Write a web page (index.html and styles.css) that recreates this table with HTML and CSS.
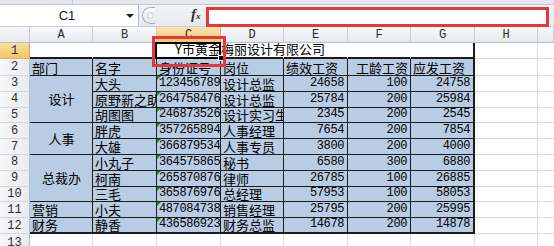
FILE: index.html
```html
<!DOCTYPE html>
<html lang="zh-CN">
<head>
<meta charset="utf-8">
<title>Sheet</title>
<link rel="stylesheet" href="styles.css">
</head>
<body>
<div class="app">
  <div class="top"><span class="sep"></span></div>
  <div class="fbar">
    <div class="namebox"><span class="ref">C1</span><span class="arrow"></span></div>
    <div class="splitter"><span class="dot"></span></div>
    <div class="fx">f<span class="sub">x</span></div>
    <div class="input"></div>
  </div>
  <div class="sheet">
    <div class="corner"></div>
    <div class="ch">A</div><div class="ch">B</div><div class="ch sel">C</div><div class="ch">D</div><div class="ch">E</div><div class="ch">F</div><div class="ch">G</div><div class="ch">H</div><div class="ch last"></div>

    <div class="rh sel">1</div>
    <div class="c r1"></div><div class="c r1"></div>
    <div class="c r1 title"><span class="ttext">Y市黄金梅丽设计有限公司</span><span class="selbox"></span><span class="handle"></span></div>
    <div class="c r1"></div><div class="c r1"></div><div class="c r1"></div><div class="c r1 gend"></div>
    <div class="c"></div><div class="c last"></div>

    <div class="rh h2">2</div>
    <div class="c t">部门</div><div class="c t">名字</div><div class="c t">身份证号</div><div class="c t">岗位</div><div class="c t">绩效工资</div><div class="c t right">工龄工资</div><div class="c t gend">应发工资</div>
    <div class="c"></div><div class="c last"></div>

    <div class="rh">3</div>
    <div class="c t merge m3">设计</div><div class="c t">大头</div><div class="c t id">123456789</div><div class="c t">设计总监</div><div class="c t n">24658</div><div class="c t n">100</div><div class="c t n gend">24758</div>
    <div class="c"></div><div class="c last"></div>

    <div class="rh">4</div>
    <div class="c t">原野新之助</div><div class="c t id">264758476</div><div class="c t">设计总监</div><div class="c t n">25784</div><div class="c t n">200</div><div class="c t n gend">25984</div>
    <div class="c"></div><div class="c last"></div>

    <div class="rh">5</div>
    <div class="c t">胡图图</div><div class="c t id">246873526</div><div class="c t">设计实习生</div><div class="c t n">2345</div><div class="c t n">200</div><div class="c t n gend">2545</div>
    <div class="c"></div><div class="c last"></div>

    <div class="rh">6</div>
    <div class="c t merge m2">人事</div><div class="c t">胖虎</div><div class="c t id">357265894</div><div class="c t">人事经理</div><div class="c t n">7654</div><div class="c t n">200</div><div class="c t n gend">7854</div>
    <div class="c"></div><div class="c last"></div>

    <div class="rh">7</div>
    <div class="c t">大雄</div><div class="c t id">366879534</div><div class="c t">人事专员</div><div class="c t n">3800</div><div class="c t n">200</div><div class="c t n gend">4000</div>
    <div class="c"></div><div class="c last"></div>

    <div class="rh">8</div>
    <div class="c t merge m3">总裁办</div><div class="c t">小丸子</div><div class="c t id">364575865</div><div class="c t">秘书</div><div class="c t n">6580</div><div class="c t n">300</div><div class="c t n gend">6880</div>
    <div class="c"></div><div class="c last"></div>

    <div class="rh">9</div>
    <div class="c t">柯南</div><div class="c t id">265870876</div><div class="c t">律师</div><div class="c t n">26785</div><div class="c t n">100</div><div class="c t n gend">26885</div>
    <div class="c"></div><div class="c last"></div>

    <div class="rh">10</div>
    <div class="c t">三毛</div><div class="c t id">365876976</div><div class="c t">总经理</div><div class="c t n">57953</div><div class="c t n">100</div><div class="c t n gend">58053</div>
    <div class="c"></div><div class="c last"></div>

    <div class="rh">11</div>
    <div class="c t">营销</div><div class="c t">小夫</div><div class="c t id">487084738</div><div class="c t">销售经理</div><div class="c t n">25795</div><div class="c t n">200</div><div class="c t n gend">25995</div>
    <div class="c"></div><div class="c last"></div>

    <div class="rh">12</div>
    <div class="c t b">财务</div><div class="c t b">静香</div><div class="c t b id">436586923</div><div class="c t b">财务总监</div><div class="c t b n">14678</div><div class="c t b n">200</div><div class="c t b n gend">14878</div>
    <div class="c"></div><div class="c last"></div>

    <div class="rh">13</div>
    <div class="c"></div><div class="c"></div><div class="c"></div><div class="c"></div><div class="c"></div><div class="c"></div><div class="c"></div><div class="c"></div><div class="c last"></div>
  </div>
  <div class="hl-cell"></div>
</div>
</body>
</html>
```

FILE: styles.css
```css
* { box-sizing: border-box; }
html, body { margin: 0; padding: 0; background: #ffffff; }
body { width: 554px; height: 246px; overflow: hidden; }

.app {
  position: relative;
  width: 554px;
  height: 246px;
  display: flex;
  flex-direction: column;
  background: #ffffff;
}

.top {
  height: 5px;
  background: #e4e8ed;
  border-bottom: 1px solid #c3c9d1;
  display: flex;
}
.top .sep {
  margin-left: 72px;
  width: 1px;
  height: 4px;
  background: #c0c6ce;
}

.fbar {
  height: 22px;
  display: flex;
  align-items: center;
  background: linear-gradient(#f1f3f6, #e6e9ee);
  border-bottom: 1px solid #c9ced5;
}
.namebox {
  width: 139px;
  height: 21px;
  background: #ffffff;
  border-right: 1px solid #b4bbc5;
  display: flex;
  align-items: center;
  padding-right: 4px;
}
.namebox .ref {
  flex: 1;
  text-align: center;
  font-family: "Liberation Sans", Arial, sans-serif;
  font-size: 13px;
  color: #1a1a1a;
  padding-left: 8px;
}
.namebox .arrow {
  width: 0;
  height: 0;
  border-left: 4px solid transparent;
  border-right: 4px solid transparent;
  border-top: 4px solid #222;
}
.splitter {
  margin-left: 3px;
  width: 13px;
  height: 17px;
  border: 1px solid #a9b1bc;
  border-right: none;
  border-radius: 9px 0 0 9px;
  background: linear-gradient(#fbfcfd, #e3e7ec);
  display: flex;
  align-items: center;
  justify-content: center;
}
.splitter .dot {
  width: 7px;
  height: 7px;
  border-radius: 50%;
  border: 1px solid #c4cad2;
  background: #f6f7f9;
  margin-left: 2px;
}
.fx {
  margin-left: 36px;
  width: 15px;
  font-family: "Liberation Serif", serif;
  font-style: italic;
  font-weight: bold;
  font-size: 15px;
  color: #333333;
  line-height: 15px;
}
.fx .sub { font-size: 9px; }
.input {
  margin-left: 0;
  width: 343px;
  height: 20px;
  margin-top: 3px;
  border: 3px solid #e5383e;
  background: #ffffff;
}

.sheet {
  display: grid;
  grid-template-columns: 30px 63px 64px 64px 63px 64px 63px 64px 63px 16px;
  grid-template-rows: 16px 16px 17px repeat(10, 15.8px) 20px;
  font-family: "Noto Sans CJK SC", sans-serif;
  font-size: 13px;
  color: #000;
}

.corner {
  background: linear-gradient(#f7f8fa, #e6e9ee);
  border-right: 1px solid #c2c8d0;
  border-bottom: 1px solid #b6bdc7;
}
.ch, .rh {
  font-family: "Liberation Mono", monospace;
  font-size: 12px;
  color: #2c2c2c;
  display: flex;
  align-items: center;
  justify-content: center;
}
.ch {
  background: linear-gradient(#f8f9fb, #e5e9ee);
  border-right: 1px solid #c8cdd4;
  border-bottom: 1px solid #b6bdc7;
}
.ch.sel {
  background: linear-gradient(#fae3b3, #f3c766);
  border-bottom: 1px solid #e0a33d;
  border-right: 1px solid #d9b36b;
}
.rh {
  background: linear-gradient(90deg, #f6f7f9, #e9ecf0);
  border-right: 1px solid #b6bdc7;
  border-bottom: 1px solid #d3d7dd;
}
.rh.sel {
  background: linear-gradient(#f9dda2, #f3c666);
  border-right: 1px solid #e0a33d;
  border-bottom: 1px solid #d9b36b;
}

.c {
  border-right: 1px solid #d9dce1;
  border-bottom: 1px solid #d9dce1;
  overflow: hidden;
  white-space: nowrap;
  display: flex;
  align-items: flex-end;
  padding: 0 1px 0 2px;
  line-height: 14px;
}
.c.last { border-right: none; }

.r1 {
  border-right-color: transparent;
  border-bottom: 2px solid #1c1c1c;
  background: #ffffff;
}
.r1.gend { border-right: 2px solid #1c1c1c; }

.title {
  position: relative;
  overflow: visible;
  z-index: 2;
  padding-left: 18px;
  padding-bottom: 1px;
  background: transparent;
}
.ttext { position: relative; z-index: 1; }
.selbox {
  position: absolute;
  left: -2px;
  top: -1px;
  right: -1px;
  bottom: -2px;
  border: 2px solid #000;
  z-index: 2;
}
.handle {
  position: absolute;
  right: -4px;
  bottom: -4px;
  width: 6px;
  height: 6px;
  background: #000;
  border: 1px solid #fff;
  z-index: 3;
}

.t {
  background: #b8cce4;
  border-right: 1px solid #1c1c1c;
  border-bottom: 1px solid #1c1c1c;
  position: relative;
}
.t.gend { border-right: 2px solid #1c1c1c; }
.t.b { border-bottom: 2px solid #1c1c1c; }
.t.right { justify-content: flex-end; padding-right: 2px; }
.t.n {
  justify-content: flex-end;
  font-family: "Liberation Mono", monospace;
  font-size: 12px;
  letter-spacing: -0.4px;
  padding-right: 3px;
  padding-bottom: 1px;
}
.t.id {
  font-family: "Liberation Mono", monospace;
  font-size: 12px;
  letter-spacing: -0.4px;
  padding-left: 2px;
  padding-bottom: 1px;
}
.t.id::before {
  content: "";
  position: absolute;
  left: 0;
  top: 0;
  width: 0;
  height: 0;
  border-top: 4px solid #1e8c2e;
  border-right: 4px solid transparent;
}
.merge {
  justify-content: center;
  align-items: center;
}
.m3 { grid-row: span 3; }
.m2 { grid-row: span 2; }

.hl-cell {
  position: absolute;
  left: 152px;
  top: 36px;
  width: 74px;
  height: 31px;
  border: 3px solid #e5383e;
  z-index: 5;
}
```
